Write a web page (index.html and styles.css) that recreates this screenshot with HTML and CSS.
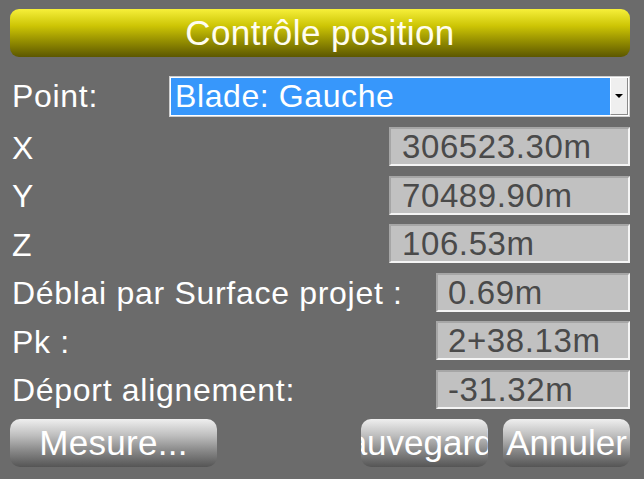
FILE: index.html
```html
<!DOCTYPE html>
<html lang="fr">
<head>
    <meta charset="UTF-8">
    <meta name="viewport" content="width=device-width, initial-scale=1.0">
    <title>Contrôle position</title>
    <link rel="stylesheet" href="styles.css">
</head>
<body>
    <div class="screen">
        <div class="title-bar">Contrôle position</div>

        <div class="row point-row">
            <div class="label">Point:</div>
            <div class="select">
                <div class="select-value">Blade: Gauche</div>
                <div class="select-btn"><span class="arrow"></span></div>
            </div>
        </div>

        <div class="fields">
            <div class="row">
                <div class="label">X</div>
                <div class="value wide">306523.30m</div>
            </div>
            <div class="row">
                <div class="label">Y</div>
                <div class="value wide">70489.90m</div>
            </div>
            <div class="row">
                <div class="label">Z</div>
                <div class="value wide">106.53m</div>
            </div>
            <div class="row">
                <div class="label">Déblai par Surface projet :</div>
                <div class="value">0.69m</div>
            </div>
            <div class="row">
                <div class="label">Pk :</div>
                <div class="value">2+38.13m</div>
            </div>
            <div class="row">
                <div class="label">Déport alignement:</div>
                <div class="value">-31.32m</div>
            </div>
        </div>

        <div class="buttons">
            <div class="btn btn-measure">Mesure...</div>
            <div class="btn-group">
                <!-- label is wider than the button, the device clips it -->
                <div class="btn btn-small"><span>Sauvegarder</span></div>
                <div class="btn btn-small"><span>Annuler</span></div>
            </div>
        </div>
    </div>
</body>
</html>
```

FILE: styles.css
```css
body {
    margin: 0;
    background-color: #6b6b6b;
    font-family: "Liberation Sans", Arial, sans-serif;
    color: #fff;
}
.screen {
    width: 644px;
    height: 479px;
    box-sizing: border-box;
    padding: 9px 14px 0 10px;
    overflow: hidden;
}
.title-bar {
    height: 48px;
    border-radius: 9px;
    background: linear-gradient(#f6ef3a 0%, #cdc505 35%, #8f8900 70%, #5c5700 100%);
    text-align: center;
    font-size: 35px;
    letter-spacing: 0.4px;
    line-height: 48px;
    color: #fffdf0;
}
.row {
    display: flex;
    justify-content: space-between;
    align-items: center;
    height: 39px;
}
.point-row {
    height: 41px;
    margin-top: 19px;
}
.label {
    padding-left: 2px;
    padding-top: 3px;
    font-size: 32px;
    letter-spacing: 0.7px;
    white-space: nowrap;
}
.point-row .label {
    padding-top: 0;
}
.select {
    display: flex;
    width: 461px;
    height: 41px;
    box-sizing: border-box;
    border: 1px solid #cfcfcf;
    background: #fff;
    padding: 1px;
}
.select-value {
    flex: 1;
    background: #3797fb;
    font-size: 32px;
    line-height: 37px;
    padding-left: 4px;
    letter-spacing: 0.6px;
}
.select-btn {
    width: 16px;
    background: #efefef;
    border-left: 1px solid #fff;
    border-right: 1px solid #8a8a8a;
    border-bottom: 1px solid #8a8a8a;
    display: flex;
    align-items: center;
    justify-content: center;
}
.arrow {
    width: 0;
    height: 0;
    border-left: 4px solid transparent;
    border-right: 4px solid transparent;
    border-top: 4px solid #000;
}
.fields {
    display: flex;
    flex-direction: column;
    gap: 9.6px;
    margin-top: 10px;
}
.value {
    width: 194px;
    height: 39px;
    box-sizing: border-box;
    border-top: 2px solid #a6a6a6;
    border-left: 2px solid #a6a6a6;
    border-bottom: 2px solid #f4f4f4;
    border-right: 2px solid #f4f4f4;
    background: #c1c1c1;
    color: #4a4a4a;
    font-size: 33px;
    line-height: 35px;
    padding-left: 10px;
    letter-spacing: 0.6px;
    white-space: nowrap;
}
.value.wide {
    width: 241px;
    padding-left: 11px;
}
.buttons {
    display: flex;
    justify-content: space-between;
    margin-top: 10px;
}
.btn-group {
    display: flex;
    gap: 15px;
}
.btn {
    height: 48px;
    border-radius: 10px;
    background: linear-gradient(#efefef 0%, #bdbdbd 35%, #8a8a8a 65%, #555 100%);
    font-size: 35px;
    line-height: 48px;
    display: flex;
    justify-content: center;
    overflow: hidden;
    white-space: nowrap;
}
.btn-measure {
    width: 207px;
    letter-spacing: 0.3px;
}
.btn-small {
    width: 127px;
}
.btn-small span {
    flex-shrink: 0;
}
```
